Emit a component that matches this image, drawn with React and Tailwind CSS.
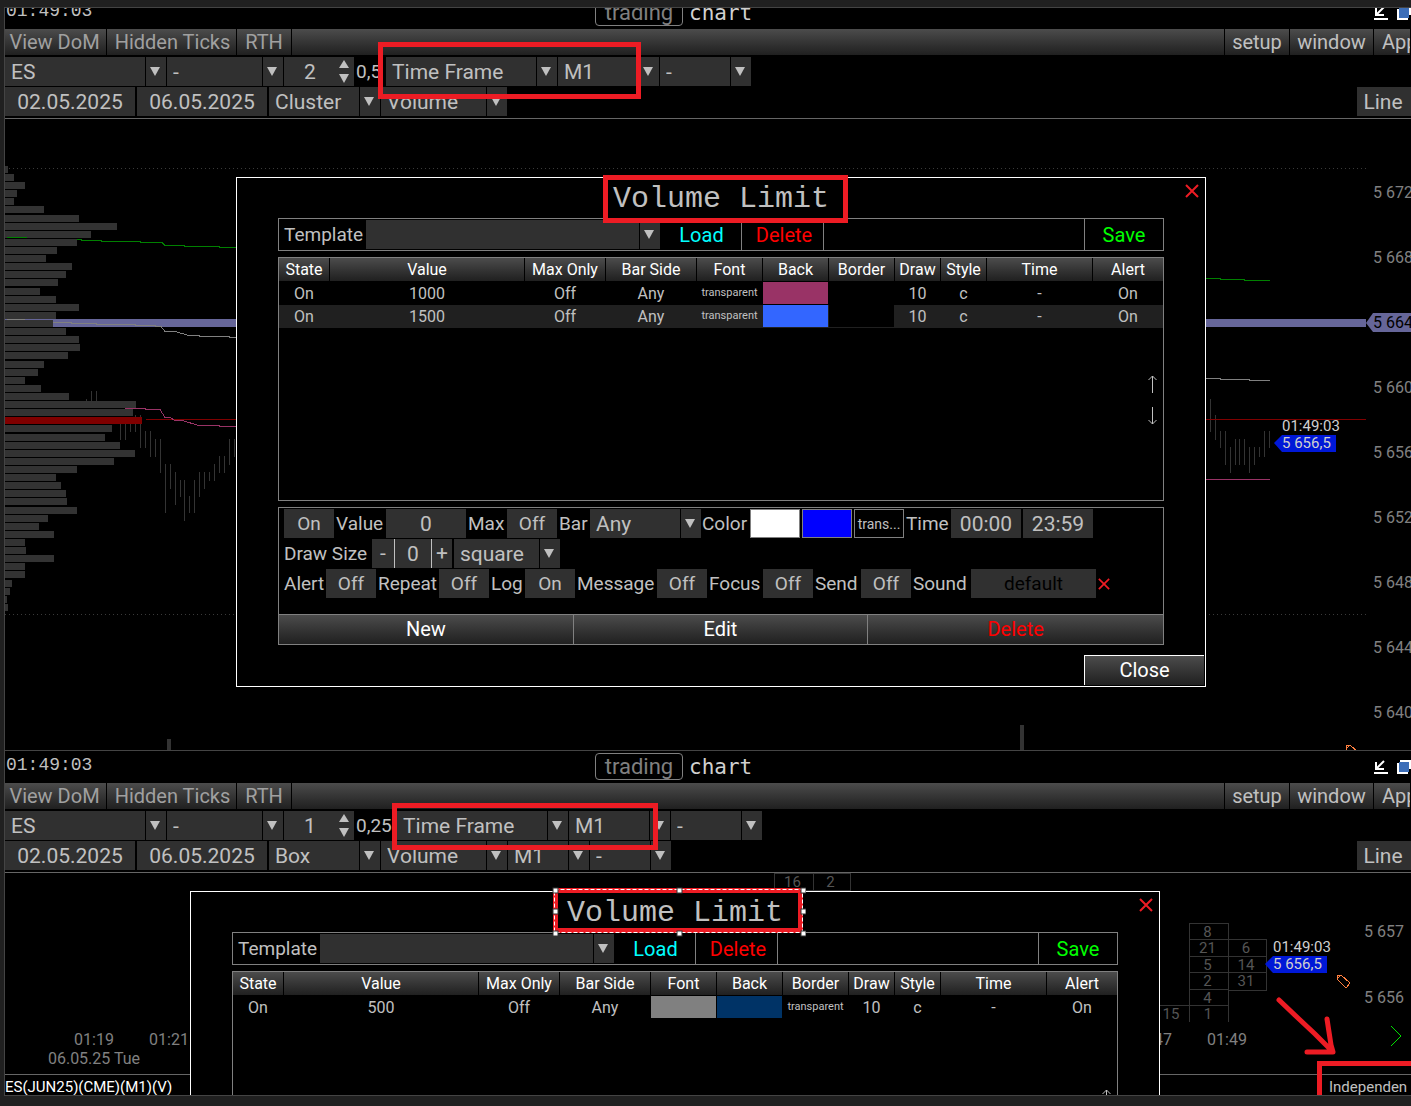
import React from "react";

const UP = "#c0c0c0";

function Arrow({ up = false }) {
  return (
    <svg width="10" height="10" viewBox="0 0 10 10" aria-hidden="true">
      <path d={up ? "M0 8L5 0L10 8Z" : "M0 1H10L5 10Z"} fill={UP} />
    </svg>
  );
}

function Combo({ label, value, width }) {
  return (
    <div className={"relative h-[29px] shrink-0 " + width}>
      <select
        aria-label={label}
        className="block h-full w-full appearance-none bg-[#303030] pl-[6px] pr-6 pt-px text-[21px] leading-[28px] text-[#c0c0c0] outline-none"
      >
        <option>{value}</option>
      </select>
      <span className="pointer-events-none absolute inset-y-0 right-0 flex w-[21px] items-center justify-center border-l border-black pb-px pr-[2px]">
        <Arrow />
      </span>
    </div>
  );
}

function TextField({ label, value, width }) {
  return (
    <input
      aria-label={label}
      defaultValue={value}
      className={
        "h-[29px] shrink-0 bg-[#303030] pt-px text-center text-[21px] leading-[28px] text-[#c0c0c0] outline-none " + width
      }
    />
  );
}

function MenuButton({ children, width = "", tone = "text-[#a0a0a0]" }) {
  return (
    <button
      className={
        "shrink-0 overflow-hidden whitespace-nowrap border-r border-black bg-linear-to-b from-[#4c4c4c] to-[#202020] text-[20px] leading-[26px] " +
        width +
        " " +
        tone
      }
    >
      {children}
    </button>
  );
}

function TitleBar({ height }) {
  return (
    <header className={"flex flex-col justify-end overflow-hidden " + height}>
      <div className="flex h-8 shrink-0 items-start">
        <time className="w-[590px] pl-[1px] font-['Liberation_Mono',monospace] text-[18px] leading-[29px] text-[#c0c0c0]">
          01:49:03
        </time>
        <button className="mt-[2px] h-[27px] w-[88px] rounded-sm border border-[#808080] text-[22px] leading-[25px] text-[#808080]">
          trading
        </button>
        <span className="flex-1 pl-[6px] font-['DejaVu_Sans_Mono',monospace] text-[21px] leading-[32px] text-[#d0d0d0]">
          chart
        </span>
        <button aria-label="Minimize" className="mt-[9px]">
          <svg width="14" height="14" viewBox="0 0 14 14" fill="none" stroke="#fff" strokeWidth="2">
            <path d="M0 13H14M2 2V9H10M2.500 8.500L10 1" />
          </svg>
        </button>
        <button aria-label="Restore" className="ml-[9px] mt-[9px] w-[14px] overflow-hidden">
          <svg width="16" height="14" viewBox="0 0 16 14">
            <path d="M0 3V14H11V12H2V3Z" fill="#fff" />
            <path d="M3 0H16V9H12V2H3Z" fill="#fff" />
            <path d="M2 2H12V12H2Z" fill="#3c6eb8" />
          </svg>
        </button>
      </div>
    </header>
  );
}

function Toolbars({ lot, step, stepWidth, kind, extra }) {
  return (
    <div className="border-b border-[#666] pb-[2px]">
      <nav className="flex h-[26px] overflow-hidden">
        <MenuButton width="w-[102px] pr-[2px]">View DoM</MenuButton>
        <MenuButton width="w-[130px] pl-[2px]">Hidden Ticks</MenuButton>
        <MenuButton width="w-[55px]">RTH</MenuButton>
        <div className="flex-1 border-r border-black bg-linear-to-b from-[#4c4c4c] to-[#202020]" />
        <MenuButton width="w-[65px]" tone="text-[#c0c0c0]">setup</MenuButton>
        <MenuButton width="w-[84px]" tone="text-[#c0c0c0]">window</MenuButton>
        <MenuButton width="w-[37px] pl-2 text-left" tone="text-[#c0c0c0]">App</MenuButton>
      </nav>
      <div className="mt-[2px] flex gap-px">
        <Combo label="Instrument" value="ES" width="w-[161px]" />
        <Combo label="Modifier" value="-" width="w-[116px]" />
        <div className="flex items-center">
          <div className="flex h-[29px] w-[70px] items-center bg-[#303030]">
            <TextField label="Multiplier" value={lot} width="w-[52px]" />
            <div className="ml-[3px] flex flex-col gap-[3px]">
              <button aria-label="Increase">
                <Arrow up />
              </button>
              <button aria-label="Decrease">
                <Arrow />
              </button>
            </div>
          </div>
          <span className={"overflow-hidden whitespace-nowrap pl-[2px] text-[19px] leading-[29px] text-[#c0c0c0] " + stepWidth}>
            {step}
          </span>
          <div className="flex gap-px">
            <Combo label="Bar type" value="Time Frame" width="w-[171px]" />
            <Combo label="Period" value="M1" width="w-[101px]" />
            <Combo label="Session" value="-" width="w-[91px]" />
          </div>
        </div>
      </div>
      <div className="mt-px flex">
        <div className="flex flex-1 gap-[2px]">
          <TextField label="From" value="02.05.2025" width="w-[130px]" />
          <TextField label="To" value="06.05.2025" width="w-[130px]" />
          <div className="flex gap-px">
            <Combo label="Chart style" value={kind} width="w-[111px]" />
            <Combo label="Data" value="Volume" width="w-[126px]" />
            {extra && <Combo label="Box period" value="M1" width="w-[81px]" />}
            {extra && <Combo label="Box option" value="-" width="w-[81px]" />}
          </div>
        </div>
        <button className="h-[29px] w-[54px] bg-[#303030] pr-[2px] text-[21px] leading-[30px] text-[#c0c0c0]">Line</button>
      </div>
    </div>
  );
}

function Cross({ size }) {
  return (
    <svg width={size} height={size} viewBox="0 0 14 14" fill="none" stroke="#ed1c24" strokeWidth="2" aria-hidden="true">
      <path d="M1 1L13 13M13 1L1 13" />
    </svg>
  );
}

const COLUMNS = [
  ["State", "w-[51px]"],
  ["Value", ""],
  ["Max Only", "w-[81px]"],
  ["Bar Side", "w-[91px]"],
  ["Font", "w-[66px]"],
  ["Back", "w-[66px]"],
  ["Border", "w-[66px]"],
  ["Draw", "w-[46px]"],
  ["Style", "w-[46px]"],
  ["Time", "w-[106px]"],
  ["Alert", "w-[70px]"],
];

const TRANSPARENT = "transparent";

const CLUSTER_LIMITS = [
  ["On", "1000", "Off", "Any", TRANSPARENT, "bg-[#993366]", "bg-black", "10", "c", "-", "On"],
  ["On", "1500", "Off", "Any", TRANSPARENT, "bg-[#3366ff]", "bg-black", "10", "c", "-", "On"],
];
const BOX_LIMITS = [
  ["On", "500", "Off", "Any", "bg-[#808080]", "bg-[#003366]", TRANSPARENT, "10", "c", "-", "On"],
];

function LimitTable({ rows }) {
  return (
    <div className="relative mt-[6px] h-[244px] border border-[#808080]">
      <table className="w-full table-fixed border-separate border-spacing-0 text-[16px] leading-[23px]">
        <thead>
          <tr>
            {COLUMNS.map(([name, width]) => (
              <th
                key={name}
                className={
                  "whitespace-nowrap border-b border-r border-black bg-linear-to-b from-[#4c4c4c] to-[#202020] p-0 text-center font-normal text-white last:border-r-0 " +
                  width
                }
              >
                {name}
              </th>
            ))}
          </tr>
        </thead>
        <tbody className="text-[#c0c0c0]">
          {rows.map((row, r) => (
            <tr key={r} className="even:bg-[#202020]">
              {row.map((cell, c) => (
                <td key={c} className="h-[23px] p-0 pr-px text-center align-top last:pr-0">
                  {cell.startsWith("bg-") ? (
                    <div className={"h-[22px] " + cell} />
                  ) : cell === TRANSPARENT ? (
                    <span className="block text-[11px] leading-[22px]">{cell}</span>
                  ) : (
                    cell
                  )}
                </td>
              ))}
            </tr>
          ))}
        </tbody>
      </table>
      <div className="absolute right-[5px] top-[117px] flex flex-col gap-[14px]">
        <button aria-label="Move up">
          <svg width="11" height="18" viewBox="0 0 11 18" fill="none" stroke={UP}>
            <path d="M5.500 18V1M1.500 5L5.500 1L9.500 5" />
          </svg>
        </button>
        <button aria-label="Move down">
          <svg width="11" height="18" viewBox="0 0 11 18" fill="none" stroke={UP}>
            <path d="M5.500 0V17M1.500 13L5.500 17L9.500 13" />
          </svg>
        </button>
      </div>
    </div>
  );
}

function Field({ label, width, children }) {
  return (
    <label className="flex h-[29px] shrink-0 items-center text-[19px] leading-[29px] text-[#c0c0c0]">
      <span className={"shrink-0 whitespace-nowrap " + width}>{label}</span>
      {children}
    </label>
  );
}

function Toggle({ value }) {
  return <button className="h-[29px] w-[50px] bg-[#303030] text-[19px] leading-[29px] text-[#c0c0c0]">{value}</button>;
}

function LimitForm() {
  return (
    <div className="mt-[6px] border border-[#808080]">
      <div className="flex h-[106px] flex-col gap-px pl-[5px] pt-px">
        <div className="flex">
          <Toggle value="On" />
          <Field label="Value" width="w-[52px] pl-[2px]">
            <TextField label="Value" value="0" width="w-[80px]" />
          </Field>
          <Field label="Max" width="w-[41px] pl-[2px]">
            <Toggle value="Off" />
          </Field>
          <Field label="Bar" width="w-[33px] pl-[2px]">
            <Combo label="Bar" value="Any" width="w-[111px]" />
          </Field>
          <Field label="Color" width="w-[49px] pl-px">
            <div className="flex gap-[2px] text-[14px]">
              <button aria-label="Font color" className="h-[29px] w-[50px] border border-[#808080] bg-white" />
              <button aria-label="Back color" className="h-[29px] w-[50px] border border-[#808080] bg-[#0000ff]" />
              <button className="h-[29px] w-[50px] border border-[#808080] leading-[26px]">trans...</button>
            </div>
          </Field>
          <Field label="Time" width="w-[47px] pl-[2px]">
            <div className="flex gap-[2px]">
              <TextField label="Time from" value="00:00" width="w-[70px]" />
              <TextField label="Time to" value="23:59" width="w-[70px]" />
            </div>
          </Field>
        </div>
        <div className="flex gap-[2px]">
          <Field label="Draw Size" width="w-[88px]">
            <div className="flex bg-[#303030] text-[21px]">
              <button className="h-[29px] w-[22px]">-</button>
              <TextField label="Draw Size" value="0" width="w-[38px] border-x border-[#c0c0c0]" />
              <button className="h-[29px] w-[20px]">+</button>
            </div>
          </Field>
          <Combo label="Shape" value="square" width="w-[106px]" />
        </div>
        <div className="flex items-center">
          <Field label="Alert" width="w-[42px]">
            <Toggle value="Off" />
          </Field>
          <Field label="Repeat" width="w-[63px] pl-[2px]">
            <Toggle value="Off" />
          </Field>
          <Field label="Log" width="w-[36px] pl-[2px]">
            <Toggle value="On" />
          </Field>
          <Field label="Message" width="w-[82px] pl-[2px]">
            <Toggle value="Off" />
          </Field>
          <Field label="Focus" width="w-[56px] pl-[2px]">
            <Toggle value="Off" />
          </Field>
          <Field label="Send" width="w-[48px] pl-[2px]">
            <Toggle value="Off" />
          </Field>
          <Field label="Sound" width="w-[60px] pl-[2px]">
            <button className="h-[29px] w-[125px] bg-[#303030] text-black">default</button>
          </Field>
          <button aria-label="Clear sound" className="ml-[2px]">
            <Cross size={12} />
          </button>
        </div>
      </div>
      <div className="grid grid-cols-3 divide-x divide-[#808080] border-t border-[#808080] text-[20px] leading-[29px] text-white">
        <button className="bg-linear-to-b from-[#4c4c4c] to-[#202020]">New</button>
        <button className="bg-linear-to-b from-[#4c4c4c] to-[#202020]">Edit</button>
        <button className="bg-linear-to-b from-[#4c4c4c] to-[#202020] text-[#ff0000]">Delete</button>
      </div>
    </div>
  );
}

function LimitDialog({ rows, place, mark, children }) {
  return (
    <section
      role="dialog"
      aria-label="Volume Limit"
      className={"absolute w-[970px] border border-white bg-black px-[41px] " + place}
    >
      <h2 className="h-10 text-center font-['Liberation_Mono',monospace] text-[30px] leading-[42px] text-[#c0c0c0]">
        Volume Limit
      </h2>
      <button aria-label="Close dialog" className="absolute right-[6px] top-[6px]">
        <Cross size={14} />
      </button>
      <div className="flex h-[33px] border border-[#808080] text-[20px] leading-[31px]">
        <div className="flex pt-px">
          <Field label="Template" width="w-[87px] pl-[5px]">
            <Combo label="Template" value="" width="w-[294px]" />
          </Field>
          <button className="w-[81px] pl-[2px] leading-[30px] text-[#00ffff]">Load</button>
        </div>
        <div className="flex flex-1">
          <button className="w-[83px] border-x border-[#808080] pl-[3px] pt-px text-[#ff0000]">Delete</button>
        </div>
        <button className="w-[79px] border-l border-[#808080] pt-px text-[#00ff00]">Save</button>
      </div>
      <LimitTable rows={rows} />
      {children}
      {mark}
    </section>
  );
}

const PROFILE = [
  3, 9, 20, 12, 9, 39, 74, 112, 86, 72, 52, 41, 67, 61, 53, 35, 51, 74, 51, 48, 61, 74, 75, 63, 39, 33, 20, 36, 64,
  131, 128, 137, 107, 100, 115, 130, 109, 72, 51, 56, 61, 62, 72, 43, 34, 49, 20, 21, 49, 20, 20, 7, 5, 2, 3,
];

const CANDLES = [
  [86, 399, 401], [91, 391, 401], [96, 391, 401], [120, 424, 440], [125, 424, 440], [130, 424, 432],
  [135, 415, 432], [140, 415, 448], [145, 431, 448], [150, 431, 457], [155, 439, 457], [160, 439, 473],
  [165, 464, 513], [170, 464, 489], [175, 472, 505], [180, 480, 497], [184, 480, 521], [189, 496, 513],
  [194, 480, 513], [199, 472, 497], [204, 472, 489], [209, 472, 481], [214, 464, 481], [219, 456, 473],
  [224, 456, 473], [229, 439, 465], [234, 439, 457], [1210, 399, 432], [1215, 415, 440], [1220, 431, 448],
  [1225, 431, 465], [1230, 447, 473], [1235, 439, 465], [1239, 439, 465], [1244, 439, 465], [1249, 447, 473],
  [1254, 447, 465], [1259, 447, 457], [1264, 431, 457], [1269, 431, 448],
];

function PriceFlag({ x, y }) {
  return (
    <g fontSize="15" fill="#d0d0d0">
      <text x={x + 8} y={y - 12}>01:49:03</text>
      <path d={`M${x} ${y}l8 -8h54v17h-54z`} fill="#0018d8" />
      <text x={x + 8} y={y + 5}>5 656,5</text>
    </g>
  );
}

function TagIcon({ x, y }) {
  return (
    <path
      d={`M${x} ${y}h4l9 8l-4 5l-9 -9zM${x + 4} ${y}l-4 4`}
      fill="none"
      stroke="#ff8040"
      shapeRendering="crispEdges"
    />
  );
}

function ClusterChart() {
  return (
    <div className="flex h-[631px]">
      <svg className="h-full min-w-0 flex-1" aria-label="Cluster chart">
        <g transform="translate(-5 -119)" fill="none">
          <path d="M5 168.500H1366M5 614.500H1366" stroke="#3a3a3a" strokeDasharray="1 3" />
          {CANDLES.map(([x, top, bottom]) => (
            <path key={x} d={`M${x + 0.5} ${top}V${bottom}`} stroke="#333" />
          ))}
          <path d="M53 319H1366V327H53Z" fill="#666699" />
          {PROFILE.map((w, i) => (
            <rect key={i} x="5" y={Math.round(165.900 + i * 8.110)} width={w} height="7" fill={i === 31 ? "#800000" : "#333"} />
          ))}
          <path d="M5 319.500H53" stroke="#666699" />
          <g shapeRendering="crispEdges">
            <path d="M7 237.500H27M77 239.500H81V240.500H101V241.500H140V242.500H162L165 245.500H184V246.500H219V247.500H236M1206 278.500H1220V279.500H1244V280.500H1270" stroke="#008000" />
            <path d="M7 319.500H25M53 322.500H71V323.500H96V324.500H135V325.500H155V326.500H161L165 331.500H175L189 335.500H199V336.500H229V337.500H236M1206 378.500H1220V379.500H1249V380.500H1270" stroke="#808080" />
            <path d="M146 419.500H1366" stroke="#7f0000" />
            <path d="M125 408.500H145V409.500H160L165 417.500H170L175 420.500H182L199 425.500H219V426.500H236M1206 479.500H1270" stroke="#993366" />
          </g>
          <path d="M167 739H171V750H167ZM1020 725H1024V750H1020Z" fill="#333" />
          <PriceFlag x={1274} y={443} />
          <TagIcon x={1346} y={745} />
        </g>
      </svg>
      <ol className="w-[45px] shrink-0 overflow-hidden whitespace-nowrap pt-[41px] text-[16px] text-[#808080]">
        {["5 672", "5 668", "5 664", "5 660", "5 656", "5 652", "5 648", "5 644", "5 640"].map((price) => (
          <li key={price} className="flex h-[65px] items-center">
            {price === "5 664" ? (
              <span className="flex">
                <svg width="7" height="19" viewBox="0 0 7 19" className="shrink-0">
                  <path d="M7 0V19L0 10Z" fill="#666699" />
                </svg>
                <span className="w-[40px] bg-[#666699] leading-[19px] text-black">{price}</span>
              </span>
            ) : (
              <span className="pl-[7px]">{price}</span>
            )}
          </li>
        ))}
      </ol>
    </div>
  );
}

const BOXES = [
  [774, 873, 39, 17, "16"], [813, 873, 37, 17, "2"],
  [1189, 923, 39, 16, "8"], [1189, 939, 39, 17, "21"], [1189, 956, 39, 16, "5"], [1189, 972, 39, 17, "2"],
  [1189, 989, 39, 16, "4"], [1228, 939, 38, 17, "6"], [1228, 956, 38, 16, "14"], [1228, 972, 38, 18, "31"],
];

function BoxChart() {
  return (
    <div className="flex h-[201px]">
      <svg className="h-full min-w-0 flex-1" aria-label="Box chart">
        <g transform="translate(-5 -873)">
          <g fill="none" stroke="#333" shapeRendering="crispEdges">
            {BOXES.map(([x, y, w, h]) => (
              <rect key={`${x}-${y}`} x={x + 0.5} y={y + 0.5} width={w} height={h} />
            ))}
            <path d="M1160 1005.500H1228M1189.500 1005V1022M1228.500 1005V1022" />
          </g>
          <g fontSize="15" fill="#555" textAnchor="middle">
            {BOXES.map(([x, y, w, , n]) => (
              <text key={`${x}-${y}`} x={x + w / 2 - 1} y={y + 14}>{n}</text>
            ))}
            <text x="1171" y="1019">15</text>
            <text x="1208" y="1019">1</text>
          </g>
          <g fontSize="16" fill="#808080" textAnchor="middle">
            <text x="94" y="1045">01:19</text>
            <text x="169" y="1045">01:21</text>
            <text x="94" y="1064">06.05.25 Tue</text>
            <text x="1152" y="1045">01:47</text>
            <text x="1227" y="1045">01:49</text>
          </g>
          <PriceFlag x={1265} y={964} />
          <TagIcon x={1337} y={975} />
        </g>
      </svg>
      <div className="w-[47px] shrink-0 pt-[26px] text-[16px] text-[#808080]">
        <div className="flex h-[66px] items-center">5 657</div>
        <div className="flex h-[66px] items-center">5 656</div>
        <button aria-label="Scroll right" className="ml-[26px] -mt-[6px] block">
          <svg width="12" height="22" viewBox="0 0 12 22" fill="none" stroke="#00e000">
            <path d="M1 1L11 11L1 21" />
          </svg>
        </button>
      </div>
    </div>
  );
}

const HANDLES = [[1, 1], [125, 1], [249, 1], [1, 22], [249, 22], [1, 44], [125, 44], [249, 44]];

function SelectedMark() {
  return (
    <svg className="absolute left-[359px] top-[-7px]" width="256" height="52" viewBox="-3 -3 256 52" aria-hidden="true">
      <rect x="2.500" y="2.500" width="245" height="40" fill="none" stroke="#ed1c24" strokeWidth="5" />
      <rect x="1.500" y="1.500" width="248" height="43" fill="none" stroke="#ed1c24" />
      <rect x="1.500" y="1.500" width="248" height="43" fill="none" stroke="#fff" strokeDasharray="4 2" />
      {HANDLES.map(([x, y]) => (
        <rect key={`${x}-${y}`} x={x - 1} y={y - 1} width="5" height="5" fill="#fff" stroke="#333" />
      ))}
    </svg>
  );
}

function Mark({ place }) {
  return <div className={"pointer-events-none absolute border-5 border-[#ed1c24] " + place} />;
}

export default function App() {
  return (
    <main className="min-h-screen overflow-hidden bg-[#202020] pb-[10px] pl-1 pt-[7px] font-['Roboto',sans-serif]">
      <section className="relative overflow-hidden border-l border-t border-[#444] bg-black">
        <TitleBar height="h-[21px]" />
        <Toolbars lot="2" step="0,5" stepWidth="w-[32px]" kind="Cluster" />
        <ClusterChart />
        <LimitDialog
          rows={CLUSTER_LIMITS}
          place="left-[231px] top-[169px] h-[510px]"
          mark={<Mark place="left-[366px] top-[-3px] h-[48px] w-[245px]" />}
        >
          <LimitForm />
          <button className="absolute bottom-px right-px h-[30px] w-[120px] border-l border-t border-white bg-linear-to-b from-[#4c4c4c] to-[#202020] pb-px text-[20px] leading-[28px] text-white">
            Close
          </button>
        </LimitDialog>
        <Mark place="left-[373px] top-[34px] h-[57px] w-[263px]" />
      </section>
      <section className="relative overflow-hidden border-y border-l border-[#444] bg-black">
        <TitleBar height="h-8" />
        <Toolbars lot="1" step="0,25" stepWidth="w-[43px]" kind="Box" extra />
        <BoxChart />
        <footer className="flex h-[21px] justify-between border-t border-[#666] text-[15px] leading-[24px]">
          <span className="text-white">ES(JUN25)(CME)(M1)(V)</span>
          <span className="w-[82px] overflow-hidden whitespace-nowrap text-[#c0c0c0]">Independen</span>
        </footer>
        <LimitDialog rows={BOX_LIMITS} place="left-[185px] top-[140px]" mark={<SelectedMark />} />
        <Mark place="left-[387px] top-[52px] h-[47px] w-[266px]" />
        <Mark place="right-[-20px] bottom-[-20px] h-[54px] w-[114px]" />
        <svg
          className="pointer-events-none absolute right-[72px] top-[244px]"
          width="64"
          height="64"
          viewBox="0 0 64 64"
          fill="none"
          stroke="#ed1c24"
          strokeWidth="5"
          strokeLinecap="round"
          aria-hidden="true"
        >
          <path d="M4 5L24 24L40 39L56 55M52 24L56 50L58 57M32 57H58" />
        </svg>
      </section>
    </main>
  );
}
